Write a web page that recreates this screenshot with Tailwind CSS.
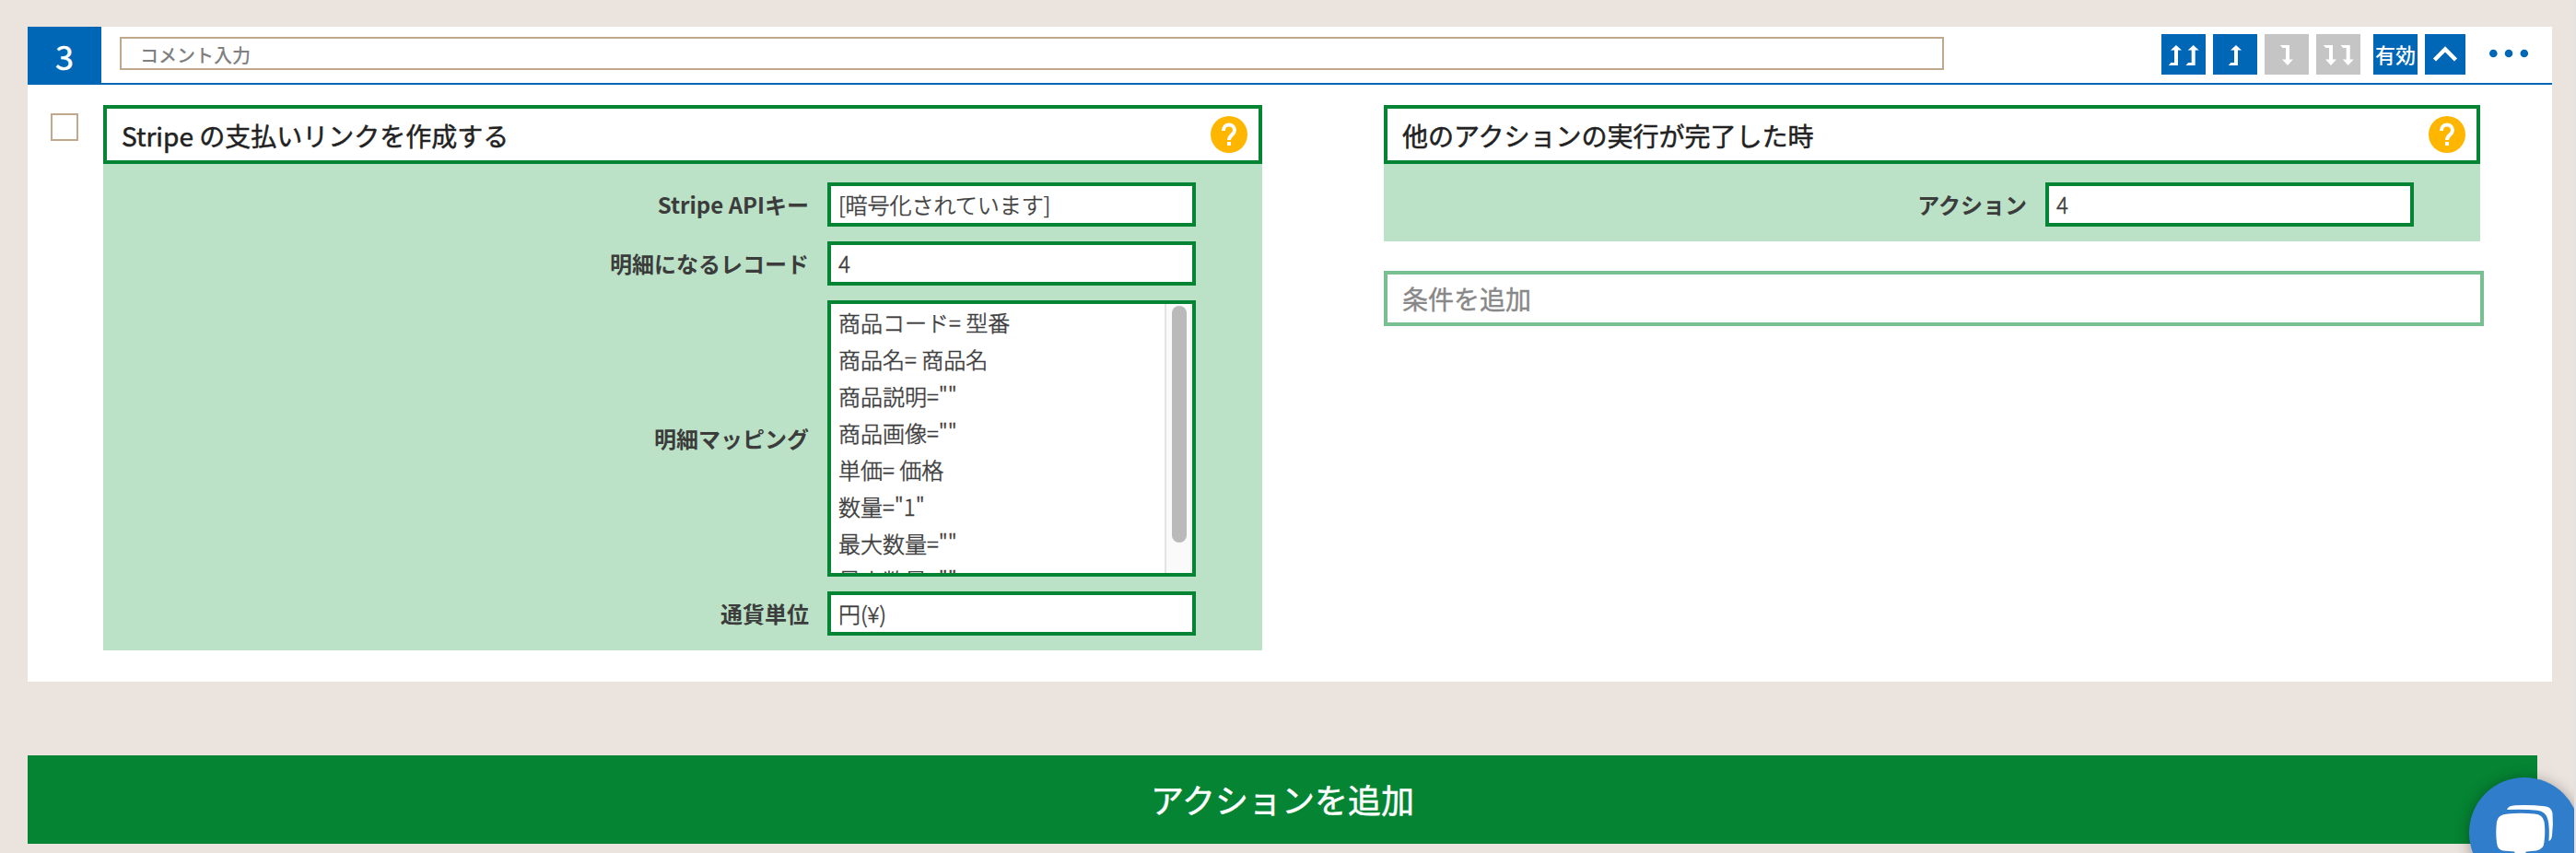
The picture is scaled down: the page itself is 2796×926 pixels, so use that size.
<!DOCTYPE html>
<html lang="ja">
<head>
<meta charset="utf-8">
<title>アクション設定</title>
<script src="https://cdn.jsdelivr.net/npm/@tailwindcss/browser@4"></script>
</head>
<body class="relative h-[926px] w-[2796px] overflow-hidden border-r-2 border-[#e3e2e0] bg-[#ebe3de] pl-[30px] pt-[29px] font-['Noto_Sans_CJK_JP',sans-serif] text-[#3c3c3c]">
<main class="w-[2740px]">
  <section class="h-[711px] bg-white">
    <header class="flex h-[63px] border-b-2 border-[#0066b6]">
      <div class="flex w-20 shrink-0 items-center justify-center bg-[#0066b6] text-[36px] leading-none font-normal text-white [-webkit-text-stroke:0.5px]">3</div>
      <div class="mt-[11px] ml-5 flex h-9 w-[1980px] items-center border-2 border-[#c0a88c] pl-5 pt-1 text-xl leading-none font-medium text-[#808080]">コメント入力</div>
      <div class="mt-2 ml-auto flex gap-2 pr-5">
        <div class="h-11 w-12 bg-[#0066b6]"><svg viewBox="0 0 48 44" width="48" height="44" fill="#fff"><path id="up" d="M16 12l6 5.500h-4V34H7.800l2.600-3H14V17.500h-4z"/><use href="#up" x="18.700"/></svg></div>
        <div class="h-11 w-12 bg-[#0066b6]"><svg viewBox="0 0 48 44" width="48" height="44" fill="#fff"><use href="#up" x="9"/></svg></div>
        <div class="h-11 w-12 bg-[#c5c5c5]"><svg viewBox="0 0 48 44" width="48" height="44" fill="#fff"><path id="down" d="M16 34l6-6.500h-4V12H7.800l2.600 3H14v12.500h-4z" transform="translate(9)"/></svg></div>
        <div class="h-11 w-12 bg-[#c5c5c5]"><svg viewBox="0 0 48 44" width="48" height="44" fill="#fff"><use href="#down" x="-9"/><use href="#down" x="9.700"/></svg></div>
        <div class="ml-1.5 flex h-11 w-12 items-center justify-center bg-[#0066b6] pb-0.5 text-[22px] leading-none font-medium whitespace-nowrap text-white">有効</div>
        <div class="h-11 w-11 bg-[#0066b6]"><svg viewBox="0 0 44 44" width="44" height="44" fill="none" stroke="#fff" stroke-width="4.500"><path d="M10.500 28L22 16.500 33.500 28"/></svg></div>
        <svg class="ml-4 h-11 w-[50px]" viewBox="0 0 50 44" fill="#0066b6"><circle cx="6.300" cy="21" r="4.300"/><circle cx="23" cy="21" r="4.300"/><circle cx="39.800" cy="21" r="4.300"/></svg>
      </div>
    </header>
    <div class="flex items-start">
      <div class="mt-[31px] ml-[25px] size-[30px] border-2 border-[#c0a88c]"></div>
      <div class="mt-[22px] ml-[27px] w-[1258px]">
        <div class="flex h-16 items-center justify-between border-4 border-[#058433] pr-3 pl-4 text-[28px] leading-none font-normal text-[#222]"><span class="pt-0.5 [-webkit-text-stroke:0.5px]">Stripe の支払いリンクを作成する</span>
          <svg viewBox="0 0 40 40" width="40" height="40"><circle cx="20" cy="20" r="20" fill="#ffb600"/><path id="q" d="M14 16v-.500a6 6 0 0 1 12 0C26 20 20 20.500 20 26M20 28v4" fill="none" stroke="#fff" stroke-width="4"/></svg>
        </div>
        <div class="grid h-[528px] grid-cols-[766px_400px] content-start items-center gap-x-5 gap-y-4 bg-[#bbe2c7] pt-5 text-2xl leading-none">
          <div class="text-right font-bold">Stripe APIキー</div><div class="flex h-12 items-center border-4 border-[#058433] bg-white pl-2 font-light [-webkit-text-stroke:0.5px]">[暗号化されています]</div>
          <div class="text-right font-bold">明細になるレコード</div><div class="flex h-12 items-center border-4 border-[#058433] bg-white pl-2 font-light [-webkit-text-stroke:0.5px]">4</div>
          <div class="text-right font-bold">明細マッピング</div>
          <div class="flex h-[300px] justify-between overflow-hidden border-4 border-[#058433] bg-white pl-2 leading-10 font-light [-webkit-text-stroke:0.5px]">
            <div>商品コード= 型番<br>商品名= 商品名<br>商品説明=""<br>商品画像=""<br>単価= 価格<br>数量="1"<br>最大数量=""<br>最小数量=""</div>
            <div class="h-full w-[30px] border-x-2 border-l-[#e4e4e4] border-r-[#f0f0f0] bg-[#fafafa] pt-0.5 pl-1.5"><div class="h-[257px] w-4 rounded-full bg-[#bababa]"></div></div>
          </div>
          <div class="text-right font-bold">通貨単位</div><div class="flex h-12 items-center border-4 border-[#058433] bg-white pl-2 font-light [-webkit-text-stroke:0.5px]">円(¥)</div>
        </div>
      </div>
      <div class="mt-[22px] ml-[132px] w-[1190px]">
        <div class="flex h-16 items-center justify-between border-4 border-[#058433] pr-3 pl-4 text-[28px] leading-none font-normal text-[#222]"><span class="pt-0.5 [-webkit-text-stroke:0.5px]">他のアクションの実行が完了した時</span>
          <svg viewBox="0 0 40 40" width="40" height="40"><circle cx="20" cy="20" r="20" fill="#ffb600"/><use href="#q"/></svg>
        </div>
        <div class="grid h-[84px] grid-cols-[698px_400px] content-start items-center gap-x-5 bg-[#bbe2c7] pt-5 text-2xl leading-none">
          <div class="text-right font-bold">アクション</div><div class="flex h-12 items-center border-4 border-[#058433] bg-white pl-2 font-light [-webkit-text-stroke:0.5px]">4</div>
        </div>
        <div class="mt-8 flex h-[60px] w-[1194px] items-center border-4 border-[#78c092] pl-4 text-[28px] leading-none text-[#888] [-webkit-text-stroke:0.4px]">条件を追加</div>
      </div>
    </div>
  </section>
  <div class="mt-20 flex h-24 w-[2724px] items-center justify-center bg-[#058433] pb-0.5 text-4xl leading-none font-normal text-white [-webkit-text-stroke:0.5px]">アクションを追加</div>
</main>
<div class="absolute top-[844px] left-[2680px] size-[120px] rounded-full bg-[#307dcb] shadow-[0_2px_16px_rgba(0,0,0,0.35)]">
  <svg viewBox="0 0 120 120" width="120" height="120" fill="#fff"><path d="M42 39.500Q55.500 38 71 39.500 80 40 81.500 48 83 58 81.500 70 81 78 73 79.500L62 80.500 55 92 49 80.500 37 79.500Q31 79 30 71 28.500 60 30 48 31 40 42 39.500z"/><path d="M41 35Q42.500 30.500 50 30.200 67 29.500 82 31.200 89.500 32 90.500 39 91.500 50 90 63 89.500 68 86.500 69 87.500 54 85.500 46 83.500 37 74 35.800 60 34 41 35z"/></svg>
</div>
</body>
</html>
